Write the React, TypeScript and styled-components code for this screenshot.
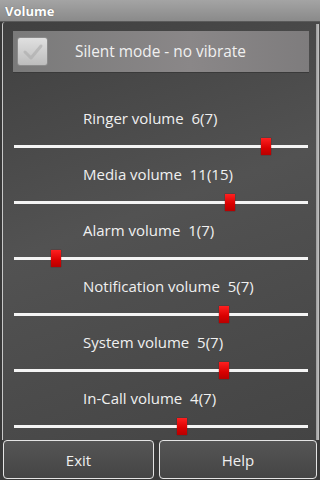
import React from "react";
import styled, { createGlobalStyle } from "styled-components";

type VolumeStream = {
  label: string;
  value: number;
  max: number;
};

const streams: VolumeStream[] = [
  { label: "Ringer volume", value: 6, max: 7 },
  { label: "Media volume", value: 11, max: 15 },
  { label: "Alarm volume", value: 1, max: 7 },
  { label: "Notification volume", value: 5, max: 7 },
  { label: "System volume", value: 5, max: 7 },
  { label: "In-Call volume", value: 4, max: 7 },
];

const GlobalStyle = createGlobalStyle`
  html, body {
    margin: 0;
    padding: 0;
    background: #2e2e2e;
  }
  body {
    font-family: "Open Sans", "DejaVu Sans", sans-serif;
  }
`;

const Screen = styled.div`
  width: 320px;
  height: 480px;
  display: flex;
  flex-direction: column;
  overflow: hidden;
  background: #383838;
`;

const TitleBar = styled.div`
  height: 21px;
  flex-shrink: 0;
  display: flex;
  align-items: center;
  padding-left: 5px;
  background: linear-gradient(#a4a4a4, #8a8a8a);
  border-bottom: 1px solid #5a5a5a;
  color: #fff;
  font-weight: 700;
  font-size: 13px;
  text-shadow: 0 0 1px #555;
`;

const Panel = styled.div`
  flex: 1;
  display: flex;
  margin-left: 2px;
  border-left: 1px solid #c8c8c8;
  border-top-left-radius: 3px;
  background: linear-gradient(160deg, #404040 0%, #525252 45%, #444 100%);
`;

const Content = styled.div`
  flex: 1;
  display: flex;
  flex-direction: column;
  padding-top: 9px;
`;

const ScrollBar = styled.div`
  width: 3px;
  margin: 2px 1px 0 2px;
  background: linear-gradient(90deg, #9a9a9a, #c4c4c4);
`;

const SilentRow = styled.div`
  height: 41px;
  margin-left: 10px;
  width: 296px;
  display: flex;
  align-items: center;
  background: linear-gradient(90deg, #7a7a7a, #8a8788 60%, #7e7c7d);
  box-shadow: 0 1px 0 #3a3a3a;
`;

const CheckBox = styled.div`
  width: 29px;
  height: 27px;
  margin-left: 4px;
  border-radius: 3px;
  border: 1px solid #8c8c8c;
  background: linear-gradient(#e0e0e0, #bdbdbd);
  display: flex;
  align-items: center;
  justify-content: center;
`;

const SilentLabel = styled.span`
  margin-left: 27px;
  color: #f0f0f0;
  font-size: 15.4px;
`;

const Streams = styled.div`
  margin-top: 32px;
  display: flex;
  flex-direction: column;
`;

const StreamGroup = styled.div`
  height: 56px;
  display: flex;
  flex-direction: column;
`;

const StreamLabel = styled.div`
  height: 28px;
  display: flex;
  align-items: center;
  padding-left: 80px;
  color: #f0f0f0;
  font-size: 15px;
  white-space: pre;
`;

const TrackArea = styled.div`
  height: 28px;
  position: relative;
  margin: 0 6px 0 11px;
`;

const Track = styled.div`
  position: absolute;
  left: 0;
  right: 0;
  top: 13px;
  height: 3px;
  background: #f4f4f4;
`;

const Thumb = styled.div`
  position: absolute;
  top: 6px;
  width: 10px;
  height: 17px;
  margin-left: -5px;
  background: linear-gradient(#ff2020, #d80000 60%, #b80000);
  box-shadow: 0 0 1px #600;
`;

const ButtonBar = styled.div`
  height: 39px;
  flex-shrink: 0;
  display: grid;
  grid-template-columns: 151px 1fr;
  gap: 5px;
  padding: 0 3px 2px 3px;
  background: #3a3a3a;
`;

const BarButton = styled.div`
  display: flex;
  align-items: center;
  justify-content: center;
  border: 1px solid #e4e4e4;
  border-radius: 4px;
  background: linear-gradient(#555, #454545);
  color: #f0f0f0;
  font-size: 15px;
`;

const CheckMark = () => (
  <svg width="22" height="20" viewBox="0 0 22 20">
    <path
      d="M3 10 L9 16 L19 4"
      fill="none"
      stroke="#aaa"
      strokeWidth="3"
      strokeLinecap="round"
      strokeLinejoin="round"
      opacity="0.6"
    />
  </svg>
);

const VolumeSlider = ({ stream }: { stream: VolumeStream }) => (
  <StreamGroup>
    <StreamLabel>
      {stream.label}  {stream.value}({stream.max})
    </StreamLabel>
    <TrackArea>
      <Track />
      <Thumb style={{ left: `${(stream.value / stream.max) * 100}%` }} />
    </TrackArea>
  </StreamGroup>
);

export default function App() {
  return (
    <>
      <GlobalStyle />
      <Screen>
        <TitleBar>Volume</TitleBar>
        <Panel>
          <Content>
            <SilentRow>
              <CheckBox>
                <CheckMark />
              </CheckBox>
              <SilentLabel>Silent mode - no vibrate</SilentLabel>
            </SilentRow>
            <Streams>
              {streams.map((s) => (
                <VolumeSlider key={s.label} stream={s} />
              ))}
            </Streams>
          </Content>
          <ScrollBar />
        </Panel>
        <ButtonBar>
          <BarButton>Exit</BarButton>
          <BarButton>Help</BarButton>
        </ButtonBar>
      </Screen>
    </>
  );
}
